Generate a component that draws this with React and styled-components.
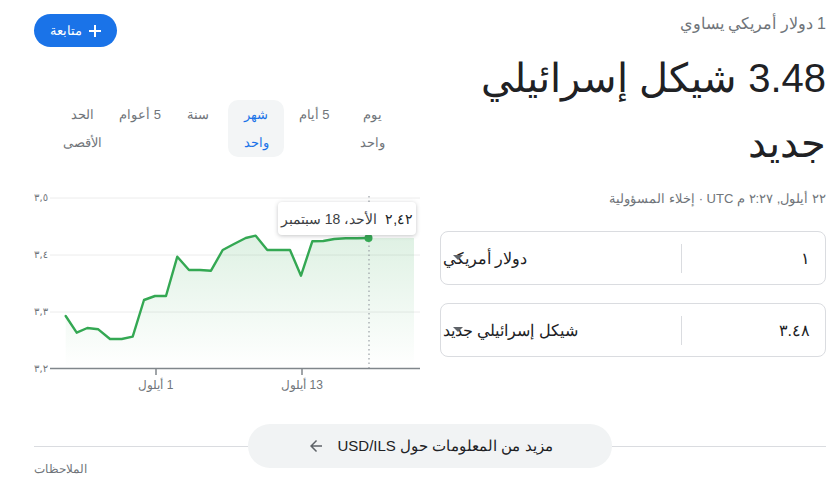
import React from "react";
import styled, { createGlobalStyle } from "styled-components";

const GlobalStyle = createGlobalStyle`
  html, body { margin: 0; padding: 0; background: #fff; }
  body { font-family: "Liberation Sans", Arial, sans-serif; color: #202124; }
`;

const Page = styled.div`
  direction: rtl;
  width: 835px;
  height: 496px;
  box-sizing: border-box;
  padding: 0 9px 0 34px;
  overflow: hidden;
`;

const Columns = styled.div`
  display: grid;
  grid-template-columns: 386px 386px;
  column-gap: 20px;
`;

const InfoColumn = styled.div`
  display: flex;
  flex-direction: column;
  padding-top: 14px;
`;

const Equals = styled.div`
  font-size: 16px;
  line-height: 20px;
  color: #70757a;
`;

const BigValue = styled.div`
  font-size: 40px;
  line-height: 65px;
  color: #202124;
  margin-top: 12px;
`;

const Stamp = styled.div`
  font-size: 13px;
  line-height: 16px;
  color: #70757a;
  margin-top: 15px;
`;

const Converter = styled.div`
  display: flex;
  flex-direction: column;
  gap: 18px;
  margin-top: 24px;
`;

const InputBox = styled.div`
  height: 54px;
  box-sizing: border-box;
  border: 1px solid #dadce0;
  border-radius: 8px;
  display: flex;
  align-items: center;
`;

const Amount = styled.div`
  width: 144px;
  box-sizing: border-box;
  padding-right: 15px;
  font-size: 16px;
  color: #202124;
  height: 29px;
  line-height: 29px;
  border-left: 1px solid #dadce0;
`;

const Unit = styled.div`
  flex: 1;
  position: relative;
  display: flex;
  justify-content: flex-end;
  padding-left: 2px;
  font-size: 16px;
  color: #202124;
`;

const Caret = styled.span`
  position: absolute;
  left: 12px;
  top: 50%;
  margin-top: -3px;
  width: 0;
  height: 0;
  border-left: 5px solid transparent;
  border-right: 5px solid transparent;
  border-top: 5px solid #5f6368;
`;

const ChartColumn = styled.div`
  display: flex;
  flex-direction: column;
  padding-top: 14px;
`;

const FollowButton = styled.button`
  align-self: flex-end;
  display: flex;
  align-items: center;
  gap: 6px;
  height: 33px;
  padding: 0 15px 0 16px;
  border: none;
  border-radius: 17px;
  background: #1a73e8;
  color: #fff;
  font-family: inherit;
  font-size: 13px;
`;

const Tabs = styled.div`
  display: flex;
  justify-content: center;
  gap: 2px;
  margin-top: 53px;
`;

const Tab = styled.div`
  width: 56px;
  height: 57px;
  box-sizing: border-box;
  padding-top: 1px;
  border-radius: 10px;
  text-align: center;
  font-size: 13px;
  line-height: 28px;
  color: ${(p) => (p.$active ? "#1a73e8" : "#70757a")};
  background: ${(p) => (p.$active ? "#f3f5f6" : "transparent")};
`;

const ChartBox = styled.div`
  position: relative;
  margin-top: 28px;
  width: 386px;
  height: 215px;
`;

const Tooltip = styled.div`
  position: absolute;
  left: 244px;
  top: 17px;
  width: 138px;
  height: 33px;
  box-sizing: border-box;
  background: #fff;
  border-radius: 4px;
  box-shadow: 0 1px 4px rgba(60, 64, 67, 0.3);
  display: flex;
  align-items: center;
  justify-content: center;
  gap: 8px;
  font-size: 14px;
  color: #3c4043;
`;

const TipValue = styled.span`
  color: #202124;
`;

const Footer = styled.div`
  margin-top: 24px;
  display: flex;
  flex-direction: column;
`;

const RuleRow = styled.div`
  display: flex;
  align-items: center;
`;

const Rule = styled.div`
  flex: 1;
  height: 1px;
  background: #dadce0;
`;

const MoreButton = styled.button`
  width: 364px;
  height: 44px;
  border: none;
  border-radius: 22px;
  background: #f1f3f4;
  display: flex;
  align-items: center;
  justify-content: center;
  gap: 12px;
  font-family: inherit;
  font-size: 15px;
  color: #202124;
  direction: rtl;
`;

const Feedback = styled.div`
  align-self: flex-end;
  margin-top: -7px;
  font-size: 12px;
  line-height: 16px;
  color: #70757a;
`;

const pts = [
  [65.7, 316], [76.7, 332.7], [87.3, 328], [98.3, 329.3], [110, 339], [121.7, 339],
  [132.7, 336.7], [144, 300], [155, 296], [166, 296], [177.3, 256.7], [189, 270],
  [200, 270], [211, 270.7], [222.7, 250], [234, 244], [245.7, 238], [255.7, 235.7],
  [267.3, 250], [278.3, 250], [290, 250], [301, 275.7], [312.3, 241.3], [323.3, 241],
  [334.3, 239], [345.7, 238.3], [356.7, 238.3], [368.3, 238],
];

const linePts = pts.map((p) => p.join(",")).join(" ");
const areaPts = linePts + " 414,238 414,368 65.7,368";

function Chart() {
  return (
    <svg width="386" height="215" viewBox="34 185 386 215" style={{ display: "block" }} direction="ltr">
      <defs>
        <linearGradient id="areaFill" x1="0" y1="0" x2="0" y2="1">
          <stop offset="0" stopColor="#34a853" stopOpacity="0.16" />
          <stop offset="1" stopColor="#34a853" stopOpacity="0" />
        </linearGradient>
      </defs>
      {[198, 255, 312].map((y) => (
        <line key={y} x1="50" x2="420" y1={y} y2={y} stroke="#ececec" strokeWidth="1" />
      ))}
      <g fontFamily="'DejaVu Sans', sans-serif" fontSize="10" fill="#70757a" textAnchor="end" direction="ltr">
        <text x="48" y="201">٣,٥</text>
        <text x="48" y="258">٣,٤</text>
        <text x="48" y="315">٣,٣</text>
        <text x="48" y="372">٣,٢</text>
      </g>
      <polygon points={areaPts} fill="url(#areaFill)" />
      <line x1="369" x2="369" y1="196" y2="368" stroke="#9aa0a6" strokeWidth="1.2" strokeDasharray="1.5 3" />
      <polyline points={linePts} fill="none" stroke="#34a853" strokeWidth="2.4" strokeLinejoin="round" strokeLinecap="round" />
      <circle cx="368.5" cy="238" r="4" fill="#34a853" />
      <line x1="50" x2="420" y1="368.5" y2="368.5" stroke="#80868b" strokeWidth="1.5" />
      <line x1="156" x2="156" y1="368" y2="375" stroke="#80868b" strokeWidth="1.5" />
      <line x1="302" x2="302" y1="368" y2="375" stroke="#80868b" strokeWidth="1.5" />
      <g fontFamily="'Liberation Sans', Arial, sans-serif" fontSize="12" fill="#70757a" textAnchor="middle">
        <text x="156" y="389" direction="rtl">1 أيلول</text>
        <text x="302" y="389" direction="rtl">13 أيلول</text>
      </g>
    </svg>
  );
}

function PlusIcon() {
  return (
    <svg width="14" height="14" viewBox="0 0 14 14">
      <path d="M7 1v12M1 7h12" stroke="#fff" strokeWidth="2" fill="none" />
    </svg>
  );
}

function ArrowLeft() {
  return (
    <svg width="18" height="18" viewBox="0 0 24 24">
      <path d="M20 11H7.83l5.59-5.59L12 4l-8 8 8 8 1.41-1.41L7.83 13H20v-2z" fill="#5f6368" />
    </svg>
  );
}

const tabs = [
  ["يوم", "واحد"],
  ["5 أيام"],
  ["شهر", "واحد"],
  ["سنة"],
  ["5 أعوام"],
  ["الحد", "الأقصى"],
];

export default function App() {
  return (
    <>
      <GlobalStyle />
      <Page>
        <Columns>
          <InfoColumn>
            <Equals>1 دولار أمريكي يساوي</Equals>
            <BigValue>3.48 شيكل إسرائيلي جديد</BigValue>
            <Stamp>٢٢ أيلول, ٢:٢٧ م UTC · إخلاء المسؤولية</Stamp>
            <Converter>
              <InputBox>
                <Amount>١</Amount>
                <Unit>
                  دولار أمريكي
                  <Caret />
                </Unit>
              </InputBox>
              <InputBox>
                <Amount>٣.٤٨</Amount>
                <Unit>
                  شيكل إسرائيلي جديد
                  <Caret />
                </Unit>
              </InputBox>
            </Converter>
          </InfoColumn>
          <ChartColumn>
            <FollowButton>
              <PlusIcon />
              متابعة
            </FollowButton>
            <Tabs>
              {tabs.map((t, i) => (
                <Tab key={i} $active={i === 2}>
                  {t.map((line, j) => (
                    <div key={j}>{line}</div>
                  ))}
                </Tab>
              ))}
            </Tabs>
            <ChartBox>
              <Chart />
              <Tooltip>
                <TipValue>٢,٤٢</TipValue>
                <span>الأحد، 18 سبتمبر</span>
              </Tooltip>
            </ChartBox>
          </ChartColumn>
        </Columns>
        <Footer>
          <RuleRow>
            <Rule />
            <MoreButton>
              <span>مزيد من المعلومات حول USD/ILS</span>
              <ArrowLeft />
            </MoreButton>
            <Rule />
          </RuleRow>
          <Feedback>الملاحظات</Feedback>
        </Footer>
      </Page>
    </>
  );
}
